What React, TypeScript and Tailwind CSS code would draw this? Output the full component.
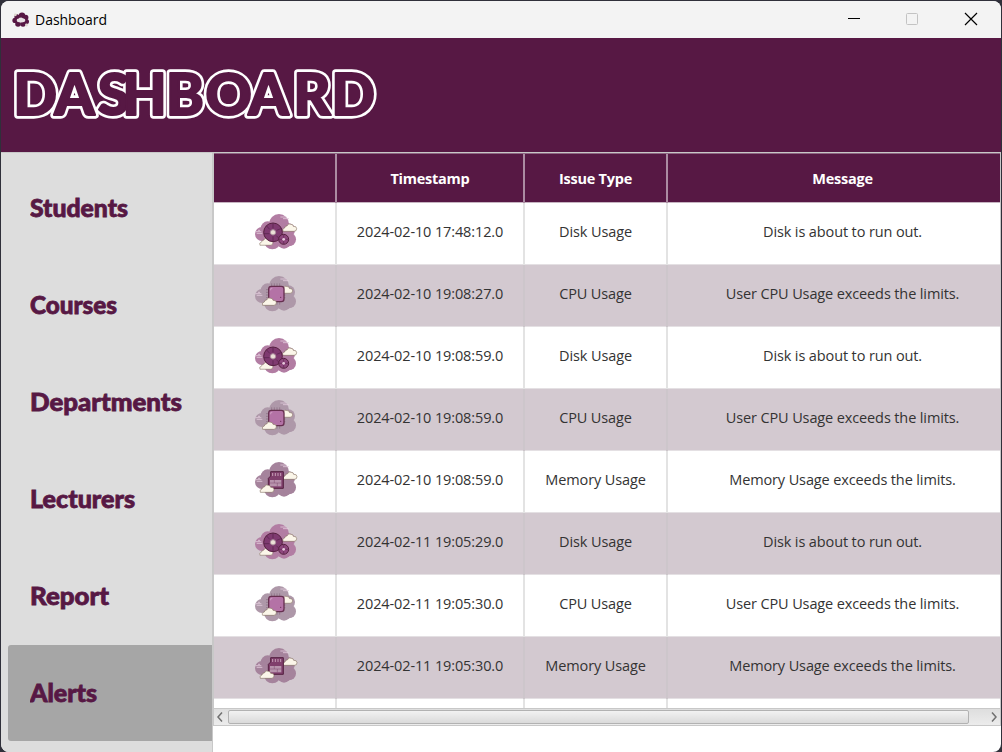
import React from "react";

type Kind = "disk" | "cpu" | "memory";

const alerts: { kind: Kind; time: string }[] = [
  { kind: "disk", time: "2024-02-10 17:48:12.0" },
  { kind: "cpu", time: "2024-02-10 19:08:27.0" },
  { kind: "disk", time: "2024-02-10 19:08:59.0" },
  { kind: "cpu", time: "2024-02-10 19:08:59.0" },
  { kind: "memory", time: "2024-02-10 19:08:59.0" },
  { kind: "disk", time: "2024-02-11 19:05:29.0" },
  { kind: "cpu", time: "2024-02-11 19:05:30.0" },
  { kind: "memory", time: "2024-02-11 19:05:30.0" },
];

const issue: Record<Kind, { label: string; message: string }> = {
  disk: { label: "Disk Usage", message: "Disk is about to run out." },
  cpu: { label: "CPU Usage", message: "User CPU Usage exceeds the limits." },
  memory: { label: "Memory Usage", message: "Memory Usage exceeds the limits." },
};

const cloudColor: Record<Kind, string> = { disk: "#b27da3", cpu: "#ae98a9", memory: "#a5839c" };

function Cloud({ x, y, s = 1 }: { x: number; y: number; s?: number }) {
  return (
    <path
      transform={`translate(${x} ${y}) scale(${s})`}
      d="M2 25Q-2 17 7 15Q8 8 14 9Q18 -1 26 4Q32 3 33 10Q43 9 43 17Q43 25 35 25Z"
      fill="#fbf6e9"
      stroke="#75604f"
      strokeWidth="1.6"
    />
  );
}

function AlertIcon({ kind }: { kind: Kind }) {
  return (
    <svg width="60" height="60" viewBox="0 0 180 180" className="block">
      <g fill={cloudColor[kind]}>
        <circle cx="102" cy="57" r="30" />
        <circle cx="68" cy="70" r="21" />
        <circle cx="51" cy="87" r="21" />
        <circle cx="82" cy="108" r="25" />
        <circle cx="117" cy="110" r="21" />
        <circle cx="132" cy="103" r="21" />
        <circle cx="130" cy="75" r="20" />
        <path d="M60 60h70v55h-70z" />
      </g>
      <path d="M106 36h18M114 41h18M31 80h18M35 85h17M39 76h6" stroke="#e2cbdc" strokeWidth="2.5" />
      {kind === "disk" && (
        <g>
          <Cloud x={112} y={54} />
          <Cloud x={43} y={97} s={0.95} />
          <circle cx="84" cy="82" r="28" fill="#7f3a70" stroke="#55203f" strokeWidth="3" />
          <path d="M84 54v16M84 94v16M64 62l10 11M94 92l10 10M56 86h17M95 76l15-6" stroke="#5d2650" strokeWidth="2.5" />
          <circle cx="84" cy="82" r="8" fill="#ece0d8" stroke="#a98a9b" strokeWidth="3" />
          <circle cx="116" cy="103" r="15" fill="#8e477d" stroke="#55203f" strokeWidth="3" />
          <path d="M116 89v9M116 108v9M102 103h9M121 103h9" stroke="#5d2650" strokeWidth="2" />
          <circle cx="116" cy="103" r="4" fill="#e6c9dc" />
        </g>
      )}
      {kind === "cpu" && (
        <g>
          <path d="M80 49v64M88 49v64M96 49v64M104 49v64M63 68h58M63 76h58M63 84h58M63 92h58" stroke="#735469" strokeWidth="2" opacity=".65" />
          <Cloud x={102} y={55} s={0.95} />
          <rect x="71" y="58" width="46" height="46" rx="8" fill="#b472a6" stroke="#673050" strokeWidth="4" />
          <circle cx="107" cy="91" r="2" fill="#6b3159" />
          <path d="M77 70v-5h5" fill="none" stroke="#dab1cf" strokeWidth="2" />
          <Cloud x={51} y={90} />
        </g>
      )}
      {kind === "memory" && (
        <g>
          <Cloud x={113} y={54} />
          <path d="M77 56h38v50h-45v-30l7-7z" fill="#803f6c" stroke="#552140" strokeWidth="3" />
          <path d="M83 60v9M91 60v9M99 60v9M107 60v9" stroke="#d2b2c5" strokeWidth="2.5" />
          <path d="M75 81h34v19h-34z" fill="#b894ad" />
          <path d="M75 90h34M88 81v9M97 90v10" stroke="#7c4b6c" strokeWidth="1.5" />
          <Cloud x={44} y={93} />
        </g>
      )}
    </svg>
  );
}

const titleX = "13.5 54.5 98 122.5 166 205.5 248.5 293.5 331.5";

function Title() {
  return (
    <svg width="400" height="114" viewBox="0 38 400 114" className="block">
      <g fontFamily="Lato, sans-serif" fontWeight="900" fontSize="57" strokeLinejoin="round">
        <text x={titleX} y="115" fill="#fff" stroke="#fff" strokeWidth="7.4">DASHBOARD</text>
        <text x={titleX} y="115" fill="#571844" stroke="#571844" strokeWidth="2.2" aria-hidden="true">DASHBOARD</text>
      </g>
    </svg>
  );
}

const nav = [
  { label: "Students", width: 98 },
  { label: "Courses", width: 87 },
  { label: "Departments", width: 152 },
  { label: "Lecturers", width: 105 },
  { label: "Report", width: 79 },
  { label: "Alerts", width: 67 },
];

const cols = "grid grid-cols-[123px_188px_143px_332px]";

export default function App() {
  return (
    <div className="h-[752px] w-[1002px] overflow-hidden bg-[#30303a] p-px pb-0 font-['Open_Sans',sans-serif]">
      <div className="flex h-[751px] w-[1000px] flex-col overflow-hidden rounded-[8px] bg-white">
        <div className="flex h-[37px] shrink-0 items-center bg-[#f3f3f3] pl-[11px]">
          <svg width="18" height="16" viewBox="0 0 18 16">
            <g fill="#571844">
              <circle cx="10" cy="3.6" r="3.2" />
              <circle cx="5" cy="4.8" r="2.6" />
              <circle cx="3" cy="8.4" r="2.6" />
              <circle cx="6" cy="12" r="2.8" />
              <circle cx="11" cy="12" r="2.8" />
              <circle cx="14.4" cy="9.6" r="2.6" />
              <circle cx="13.8" cy="5.4" r="2.6" />
            </g>
            <path d="M5 9.5q-1-3 2-3 2-2 4 0 3 0 2 3-4 2-8 0z" fill="#e8e2e4" />
            <circle cx="3.4" cy="2.8" r="1.4" fill="#ddd8cf" />
            <circle cx="14.5" cy="13" r="1.4" fill="#ddd8cf" />
          </svg>
          <span className="ml-[5px] text-[14px] tracking-[-0.02px] text-black">Dashboard</span>
          <svg width="140" height="37" viewBox="840 1 140 37" className="ml-auto mr-[21px]" fill="none">
            <path d="M848 18.5h12" stroke="#000" />
            <rect x="906.5" y="13.5" width="11" height="11" rx="1" stroke="#c3c3c3" />
            <path d="M965 13l12 12M977 13l-12 12" stroke="#000" strokeWidth="1.2" />
          </svg>
        </div>
        <div className="h-[114px] shrink-0 bg-[#571844]">
          <div className="-ml-px">
            <Title />
          </div>
        </div>
        <div className="flex min-h-0 flex-1">
          <nav className="flex w-[212px] shrink-0 flex-col border-r border-t border-[#c8c8c8] bg-[#dddddd] pl-[7px] pt-[7px]">
            {nav.map((n) => (
              <div
                key={n.label}
                className={`mb-px flex h-[96px] items-center rounded-l-[3px] pl-[22px] ${n.label === "Alerts" ? "bg-[#a6a6a6]" : ""}`}
              >
                <svg width="170" height="40" className="block">
                  <text
                    x="0"
                    y="29"
                    textLength={n.width}
                    lengthAdjust="spacingAndGlyphs"
                    fill="#571844"
                    stroke="#571844"
                    strokeWidth="0.8"
                    fontFamily="Lato, sans-serif"
                    fontWeight="900"
                    fontSize="24"
                  >
                    {n.label}
                  </text>
                </svg>
              </div>
            ))}
          </nav>
          <div className="flex min-w-0 flex-1 flex-col">
            <div className="flex h-[574px] shrink-0 flex-col overflow-hidden border-x border-t border-[#c8c8c8]">
              <div className={`${cols} h-[50px] shrink-0 border-b border-t border-b-[#c6b4c1] border-t-[#8e6582] bg-[#571844] text-center text-[14.5px] font-bold leading-[50px] tracking-[-0.25px] text-white`}>
                <div className="border-r-2 border-[#ab8ba2]" />
                <div className="border-r-2 border-[#ab8ba2]">Timestamp</div>
                <div className="border-r-2 border-[#ab8ba2]">Issue Type</div>
                <div className="pl-[17px]">Message</div>
              </div>
              {alerts.map((a, i) => {
                const line = i % 2 ? "border-[#cdc6cb]" : "border-[#e3e3e3]";
                return (
                  <div
                    key={i}
                    className={`${cols} h-[62px] shrink-0 border-b border-[#e4e0e3] text-center text-[14.5px] leading-[57px] tracking-[-0.12px] text-[#333] ${i % 2 ? "bg-[#d3c9d0]" : "bg-white"}`}
                  >
                    <div className={`flex justify-center border-r-2 pt-[2px] ${line}`}>
                      <AlertIcon kind={a.kind} />
                    </div>
                    <div className={`border-r-2 ${line}`}>{a.time}</div>
                    <div className={`border-r-2 ${line}`}>{issue[a.kind].label}</div>
                    <div className="pl-[17px]">{issue[a.kind].message}</div>
                  </div>
                );
              })}
              <div className={`${cols} h-[9px] shrink-0`}>
                <div className="border-r-2 border-[#e3e3e3]" />
                <div className="border-r-2 border-[#e3e3e3]" />
                <div className="border-r-2 border-[#e3e3e3]" />
                <div />
              </div>
              <div className="flex h-[18px] shrink-0 items-center border-b border-t border-[#c8c8c8] bg-gradient-to-b from-[#dedede] to-[#ececec]">
                <svg width="14" height="16" fill="none">
                  <path d="M8 3.5L4 8l4 4.5" stroke="#707070" strokeWidth="1.5" />
                </svg>
                <div className="h-[14px] w-[741px] rounded-[2px] border border-[#b2b2b2] bg-gradient-to-b from-[#f2f2f2] to-[#dadada]" />
                <svg width="14" height="16" fill="none" className="ml-auto">
                  <path d="M6 3.5l4 4.5-4 4.5" stroke="#707070" strokeWidth="1.5" />
                </svg>
              </div>
            </div>
          </div>
        </div>
      </div>
    </div>
  );
}
